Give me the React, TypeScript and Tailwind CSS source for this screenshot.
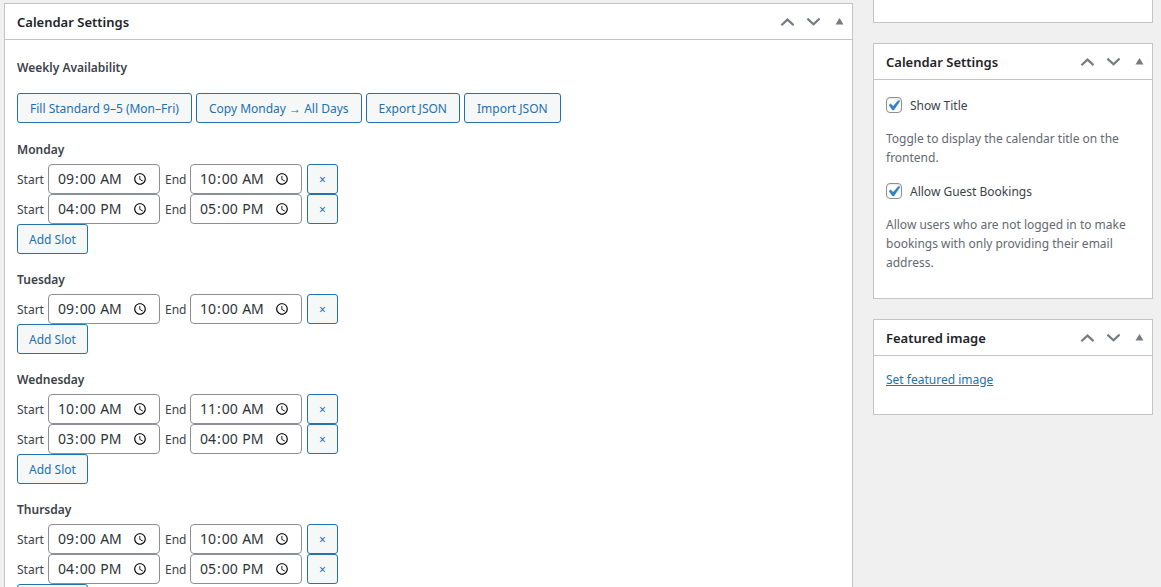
import type { ReactNode } from "react";

type Slot = { start: string; end: string };
type Day = { name: string; slots: Slot[] };

const days: Day[] = [
  { name: "Monday", slots: [{ start: "09:00", end: "10:00" }, { start: "16:00", end: "17:00" }] },
  { name: "Tuesday", slots: [{ start: "09:00", end: "10:00" }] },
  { name: "Wednesday", slots: [{ start: "10:00", end: "11:00" }, { start: "15:00", end: "16:00" }] },
  { name: "Thursday", slots: [{ start: "09:00", end: "10:00" }, { start: "16:00", end: "17:00" }] },
];

function PanelActions() {
  const button = "flex h-9 w-[26px] items-center justify-center text-[#787c82]";
  return (
    <div className="flex shrink-0">
      <button type="button" aria-label="Move up" className={button}>
        <svg width="14" height="10" viewBox="0 0 14 10" fill="none" stroke="currentColor" strokeWidth="2.2">
          <path d="M1.4 8.2 7.5 2.6l6.1 5.6" />
        </svg>
      </button>
      <button type="button" aria-label="Move down" className={button}>
        <svg width="14" height="10" viewBox="0 0 14 10" fill="none" stroke="currentColor" strokeWidth="2.2">
          <path d="M1.4 1.6 7.5 7.2l6.1-5.6" />
        </svg>
      </button>
      <button type="button" aria-label="Toggle panel" className={button}>
        <svg width="10" height="10" viewBox="0 0 10 10" fill="currentColor">
          <path d="M5.5 1l4 6.5h-8z" />
        </svg>
      </button>
    </div>
  );
}

function Panel({ title, children }: { title: string; children: ReactNode }) {
  return (
    <section className="border border-[#c3c4c7] bg-white">
      <header className="flex h-9 items-center justify-between border-b border-[#c3c4c7] pl-3">
        <h2 className="pt-0.5 text-[13px] font-semibold text-[#1d2327]">{title}</h2>
        <PanelActions />
      </header>
      {children}
    </section>
  );
}

function Button({ padding = "px-[11px]", children }: { padding?: string; children: ReactNode }) {
  return (
    <button
      type="button"
      className={
        "h-[30px] rounded-[3px] border border-[#2271b1] bg-[#f6f7f7] pt-0.5 text-xs whitespace-nowrap text-[#2271b1] " +
        padding
      }
    >
      {children}
    </button>
  );
}

function TimeInput({ id, value }: { id: string; value: string }) {
  return (
    <input
      id={id}
      type="time"
      defaultValue={value}
      className="h-[30px] w-28 rounded-[4px] border border-[#8c8f94] bg-white px-2 text-sm text-[#2c3338]"
    />
  );
}

function SlotRow({ id, slot }: { id: string; slot: Slot }) {
  return (
    <div className="flex items-center gap-[5px]">
      <div className="flex items-center gap-1">
        <label htmlFor={id + "-start"} className="w-[27px] pt-0.5">Start</label>
        <TimeInput id={id + "-start"} value={slot.start} />
      </div>
      <div className="flex items-center gap-1">
        <label htmlFor={id + "-end"} className="w-[21px] pt-0.5">End</label>
        <TimeInput id={id + "-end"} value={slot.end} />
      </div>
      <button
        type="button"
        aria-label="Remove slot"
        className="h-[30px] w-[31px] rounded-[3px] border border-[#2271b1] bg-[#f6f7f7] pt-0.5 text-xs text-[#2271b1]"
      >
        ×
      </button>
    </div>
  );
}

function Option({ id, label, children }: { id: string; label: string; children: ReactNode }) {
  return (
    <div>
      <div className="flex h-5 items-center gap-2">
        <span className="relative flex size-4">
          <input
            id={id}
            type="checkbox"
            defaultChecked
            className="peer size-4 appearance-none rounded-[4px] border border-[#8c8f94] bg-white shadow-[inset_0_1px_2px_rgba(0,0,0,0.1)]"
          />
          <svg
            viewBox="0 0 20 20"
            className="pointer-events-none absolute -top-[2px] -left-[3px] hidden size-[21px] fill-[#3582c4] stroke-[#3582c4] stroke-[0.5] peer-checked:block"
          >
            <path d="M14.83 4.89l1.34.94-5.81 8.38H9.02L5.78 9.67l1.34-1.25 2.57 2.4z" />
          </svg>
        </span>
        <label htmlFor={id} className="pt-0.5 text-[#3c434a]">{label}</label>
      </div>
      <p className="mt-3.5 leading-[19px] text-[#646970]">{children}</p>
    </div>
  );
}

export default function App() {
  return (
    <div className="flex min-h-screen items-start gap-5 bg-[#f0f0f1] pr-2 pl-1 font-['Noto_Sans',sans-serif] text-xs text-[#3c434a]">
      <main className="min-w-0 flex-1 pt-[3px]">
        <Panel title="Calendar Settings">
          <div className="px-3 pt-[18px] pb-3">
            <h3 className="leading-5 font-semibold">Weekly Availability</h3>
            <div className="mt-[15px] flex flex-wrap gap-1">
              <Button padding="px-3">Fill Standard 9–5 (Mon–Fri)</Button>
              <Button padding="px-3">Copy Monday → All Days</Button>
              <Button padding="px-3">Export JSON</Button>
              <Button padding="px-3">Import JSON</Button>
            </div>
            <div className="mt-[17px] flex flex-col gap-4">
              {days.map((day) => (
                <section key={day.name}>
                  <h4 className="mb-1 leading-5 font-semibold">{day.name}</h4>
                  {day.slots.map((slot, i) => (
                    <SlotRow key={i} id={day.name + "-" + i} slot={slot} />
                  ))}
                  <Button>Add Slot</Button>
                </section>
              ))}
            </div>
          </div>
        </Panel>
      </main>
      <aside className="flex w-70 shrink-0 flex-col gap-5">
        <div className="h-[23px] border border-t-0 border-[#c3c4c7] bg-white" />
        <Panel title="Calendar Settings">
          <div className="flex flex-col gap-3.5 px-3 pt-[15px] pb-[26px]">
            <Option id="show-title" label="Show Title">
              Toggle to display the calendar title on the frontend.
            </Option>
            <Option id="guest-bookings" label="Allow Guest Bookings">
              Allow users who are not logged in to make bookings with only providing their email address.
            </Option>
          </div>
        </Panel>
        <Panel title="Featured image">
          <div className="px-3 pt-3.5 pb-6 leading-5">
            <a href="#featured-image" className="text-[#2271b1] underline">Set featured image</a>
          </div>
        </Panel>
      </aside>
    </div>
  );
}
